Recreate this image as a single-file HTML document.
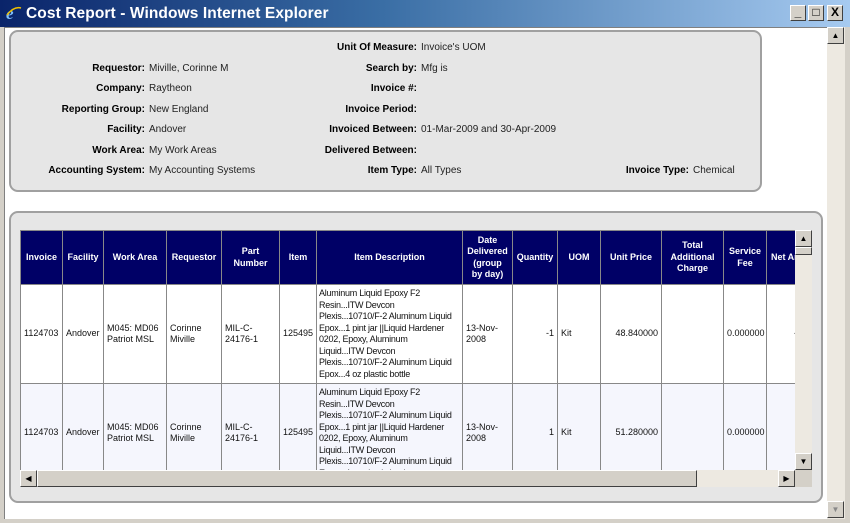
<!DOCTYPE html>
<html><head><style>
*{margin:0;padding:0;box-sizing:border-box}
body{width:850px;height:523px;overflow:hidden;background:#d4d0c8;font-family:"Liberation Sans",Arial,sans-serif;position:relative}
.abs{position:absolute}
#title{left:0;top:0;width:850px;height:27px;background:linear-gradient(90deg,#0a246a 0%,#3a6ea5 45%,#a6caf0 100%);}
#title span{position:absolute;left:26px;top:5px;color:#fff;font-weight:bold;font-size:15.5px;letter-spacing:0.1px}
.wb{position:absolute;top:5px;width:16px;height:16px;background:#d4d0c8;border:1px solid;border-color:#fff #404040 #404040 #fff;font-size:12px;font-weight:bold;text-align:center;line-height:13px}
#client{left:4px;top:27px;width:823px;height:492px;background:#fff;border-left:1px solid #808080;border-top:1px solid #808080}
#vs{left:827px;top:27px;width:18px;height:492px;background:#ede9e1}
.sb{position:absolute;width:17px;height:17px;background:#d4d0c8;border:1px solid;border-color:#fff #404040 #404040 #fff;font-size:8px;text-align:center;line-height:15px;color:#000}
.panel{background:#e6e6e6;border:2px solid #a0a0a0;border-radius:9px}
.l{position:absolute;text-align:right;font-weight:bold;font-size:10px;white-space:nowrap}
.v{position:absolute;font-size:10px;white-space:nowrap;color:#222}
#tw{left:20px;top:230px;width:775px;height:240px;overflow:hidden;background:#fff}
table{border-collapse:collapse;table-layout:fixed;font-size:9px}
th{background:#000066;color:#fff;font-weight:bold;font-size:9px;height:54px;border:1px solid #888;text-align:center;line-height:11.5px;padding:0 2px}
td{border:1px solid #888;padding:0 3px;line-height:11.5px;vertical-align:middle;color:#111}
td.d{letter-spacing:-0.25px;padding:0 2px}
tr.r1 td{height:99px;background:#fff}
tr.r2 td{height:99px;background:#f5f6fd}
.n{text-align:right}
</style></head><body>
<div id="title" class="abs">
<svg class="abs" style="left:5px;top:4px" width="18" height="18" viewBox="0 0 18 18"><text x="1" y="15" font-size="17" font-style="italic" font-weight="bold" fill="#7fc0ff" font-family="Liberation Serif">e</text><path d="M2 11 Q9 2 16 4" stroke="#f0c000" stroke-width="1.5" fill="none"/></svg>
<span>Cost Report - Windows Internet Explorer</span>
<div class="wb" style="left:790px">_</div>
<div class="wb" style="left:808px">□</div>
<div class="wb" style="left:827px">X</div>
</div>
<div id="client" class="abs"></div>
<div id="vs" class="abs">
<div class="sb" style="left:0;top:0">▲</div>
<div class="sb" style="left:0;top:474px;color:#888">▼</div>
</div>

<div class="abs panel" style="left:9px;top:30px;width:753px;height:162px"></div>
<div class="l" style="right:705px;top:63px">Requestor:</div><div class="v" style="left:149px;top:63px">Miville, Corinne M</div>
<div class="l" style="right:705px;top:83px">Company:</div><div class="v" style="left:149px;top:83px">Raytheon</div>
<div class="l" style="right:705px;top:104px">Reporting Group:</div><div class="v" style="left:149px;top:104px">New England</div>
<div class="l" style="right:705px;top:124px">Facility:</div><div class="v" style="left:149px;top:124px">Andover</div>
<div class="l" style="right:705px;top:145px">Work Area:</div><div class="v" style="left:149px;top:145px">My Work Areas</div>
<div class="l" style="right:705px;top:165px">Accounting System:</div><div class="v" style="left:149px;top:165px">My Accounting Systems</div>

<div class="l" style="right:433px;top:42px">Unit Of Measure:</div><div class="v" style="left:421px;top:42px">Invoice's UOM</div>
<div class="l" style="right:433px;top:63px">Search by:</div><div class="v" style="left:421px;top:63px">Mfg is</div>
<div class="l" style="right:433px;top:83px">Invoice #:</div>
<div class="l" style="right:433px;top:104px">Invoice Period:</div>
<div class="l" style="right:433px;top:124px">Invoiced Between:</div><div class="v" style="left:421px;top:124px">01-Mar-2009 and 30-Apr-2009</div>
<div class="l" style="right:433px;top:145px">Delivered Between:</div>
<div class="l" style="right:433px;top:165px">Item Type:</div><div class="v" style="left:421px;top:165px">All Types</div>
<div class="l" style="right:161px;top:165px">Invoice Type:</div><div class="v" style="left:693px;top:165px">Chemical</div>

<div class="abs panel" style="left:9px;top:211px;width:814px;height:292px"></div>
<div id="tw" class="abs">
<table style="width:825px">
<colgroup><col style="width:42px"><col style="width:41px"><col style="width:63px"><col style="width:55px"><col style="width:58px"><col style="width:37px"><col style="width:146px"><col style="width:50px"><col style="width:45px"><col style="width:43px"><col style="width:61px"><col style="width:62px"><col style="width:43px"><col style="width:79px"></colgroup>
<tr><th>Invoice</th><th>Facility</th><th>Work Area</th><th>Requestor</th><th>Part<br>Number</th><th>Item</th><th>Item Description</th><th>Date<br>Delivered<br>(group<br>by day)</th><th>Quantity</th><th>UOM</th><th>Unit Price</th><th>Total Additional Charge</th><th>Service Fee</th><th style="text-align:left;padding-left:4px">Net Amount</th></tr>
<tr class="r1"><td>1124703</td><td>Andover</td><td>M045: MD06 Patriot MSL</td><td>Corinne Miville</td><td>MIL-C-24176-1</td><td>125495</td><td class="d">Aluminum Liquid Epoxy F2<br>Resin...ITW Devcon<br>Plexis...10710/F-2 Aluminum Liquid<br>Epox...1 pint jar ||Liquid Hardener<br>0202, Epoxy, Aluminum<br>Liquid...ITW Devcon<br>Plexis...10710/F-2 Aluminum Liquid<br>Epox...4 oz plastic bottle</td><td>13-Nov-2008</td><td class="n">-1</td><td>Kit</td><td class="n">48.840000</td><td></td><td class="n">0.000000</td><td class="n" style="text-align:left;padding-left:27px">-48</td></tr>
<tr class="r2"><td>1124703</td><td>Andover</td><td>M045: MD06 Patriot MSL</td><td>Corinne Miville</td><td>MIL-C-24176-1</td><td>125495</td><td class="d">Aluminum Liquid Epoxy F2<br>Resin...ITW Devcon<br>Plexis...10710/F-2 Aluminum Liquid<br>Epox...1 pint jar ||Liquid Hardener<br>0202, Epoxy, Aluminum<br>Liquid...ITW Devcon<br>Plexis...10710/F-2 Aluminum Liquid<br>Epox...4 oz plastic bottle</td><td>13-Nov-2008</td><td class="n">1</td><td>Kit</td><td class="n">51.280000</td><td></td><td class="n">0.000000</td><td class="n" style="text-align:left;padding-left:30px">51</td></tr>
</table>
</div>
<div class="abs" style="left:795px;top:230px;width:17px;height:240px;background:#ede9e1"></div>
<div class="sb" style="left:795px;top:230px">▲</div>
<div class="sb" style="left:795px;top:247px;height:8px"></div>
<div class="sb" style="left:795px;top:453px">▼</div>
<div class="abs" style="left:20px;top:470px;width:792px;height:17px;background:#ede9e1"></div>
<div class="sb" style="left:20px;top:470px">◀</div>
<div class="sb" style="left:37px;top:470px;width:660px"></div>
<div class="sb" style="left:778px;top:470px">▶</div>
<div class="abs" style="left:795px;top:470px;width:17px;height:17px;background:#d4d0c8"></div>
</body></html>
